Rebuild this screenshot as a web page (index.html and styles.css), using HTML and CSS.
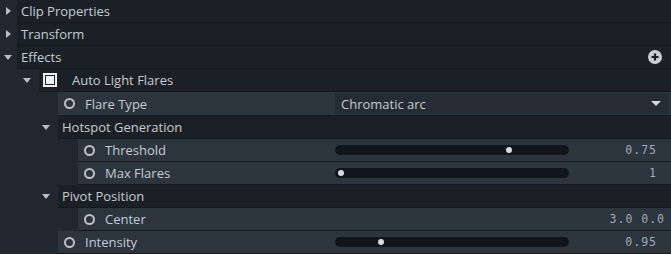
FILE: index.html
```html
<!DOCTYPE html>
<html lang="en">
<head>
  <meta charset="UTF-8" />
  <title>Clip Properties</title>
  <link rel="stylesheet" href="styles.css">
</head>
<body>
  <div class="panel">
    <div class="row group lvl0"><span class="tri closed"></span><div class="cell">Clip Properties</div></div>
    <div class="row group lvl0"><span class="tri closed"></span><div class="cell">Transform</div></div>
    <div class="row group lvl0"><span class="tri"></span><div class="cell">Effects
      <span class="add">
        <svg width="14" height="14" viewBox="0 0 14 14"><circle cx="7" cy="7" r="7" fill="#c9ccd0"/><path d="M7 3.5v7M3.5 7h7" stroke="#1b2027" stroke-width="2.2"/></svg>
      </span></div></div>

    <div class="row group lvl1"><span class="tri"></span><div class="cell"><span class="check"></span>Auto Light Flares</div></div>

    <div class="row prop lvl2 tall">
      <div class="cell"><span class="dot"></span><span class="label">Flare Type</span>
        <div class="select">Chromatic arc<span class="caret"></span></div>
      </div>
    </div>

    <div class="row group lvl2"><span class="tri"></span><div class="cell">Hotspot Generation</div></div>
    <div class="row prop lvl3">
      <div class="cell"><span class="dot"></span><span class="label">Threshold</span>
        <div class="slider"><div class="track"><span class="knob" style="left: 171px"></span></div><span class="val">0.75</span></div>
      </div>
    </div>
    <div class="row prop lvl3">
      <div class="cell"><span class="dot"></span><span class="label">Max Flares</span>
        <div class="slider"><div class="track"><span class="knob" style="left: 3px"></span></div><span class="val">1</span></div>
      </div>
    </div>

    <div class="row group lvl2"><span class="tri"></span><div class="cell">Pivot Position</div></div>
    <div class="row prop lvl3">
      <div class="cell"><span class="dot"></span><span class="label">Center</span>
        <div class="slider"><span class="val wide">3.0 0.0</span></div>
      </div>
    </div>

    <div class="row prop lvl2">
      <div class="cell"><span class="dot"></span><span class="label">Intensity</span>
        <div class="slider"><div class="track"><span class="knob" style="left: 43px"></span></div><span class="val">0.95</span></div>
      </div>
    </div>
  </div>
</body>
</html>
```

FILE: styles.css
```css
* {
  margin: 0;
  padding: 0;
  box-sizing: border-box;
}

body {
  background: #21272e;
  font-family: 'Open Sans', 'Noto Sans', sans-serif;
  font-size: 13px;
  color: #c6cbd0;
}

.panel {
  width: 671px;
  height: 254px;
  overflow: hidden;
  background: #21272e;
}

.row {
  display: flex;
  height: 23px;
  align-items: stretch;
}

.row.tall {
  height: 24px;
}

.lvl0 { padding-left: 0; }
.lvl1 { padding-left: 19px; }
.lvl2 { padding-left: 38px; }
.lvl3 { padding-left: 58px; }

.tri {
  width: 17px;
  flex: none;
  position: relative;
}

.tri::after {
  content: '';
  position: absolute;
  left: 4px;
  top: 9px;
  border-left: 4px solid transparent;
  border-right: 4px solid transparent;
  border-top: 5px solid #b9bec4;
}

.tri.closed::after {
  left: 6px;
  top: 7px;
  border-top: 4px solid transparent;
  border-bottom: 4px solid transparent;
  border-left: 5px solid #b9bec4;
  border-right: none;
}

.lvl1 .tri, .lvl2 .tri {
  width: 20px;
}

.cell {
  flex: 1;
  display: flex;
  align-items: center;
  border-bottom: 1px solid #15191e;
  position: relative;
}

.group .cell {
  background: #1b2027;
  padding-left: 4px;
}

.prop .cell {
  background: #2c343e;
  padding-left: 6px;
}

.lvl2.prop .cell,
.lvl3.prop .cell {
  margin-left: 20px;
}

.check {
  width: 14px;
  height: 14px;
  border: 2px solid #eceef0;
  background: #1b2027;
  margin: 0 15px 0 0;
  position: relative;
}

.check::after {
  content: '';
  position: absolute;
  left: 1px;
  top: 1px;
  width: 8px;
  height: 8px;
  background: #f4f5f6;
}

.dot {
  width: 11px;
  height: 11px;
  border: 2px solid #bcc1c6;
  border-radius: 50%;
  margin-right: 10px;
  flex: none;
}

.label {
  flex: none;
}

.select {
  position: absolute;
  left: 277px;
  right: 2px;
  top: 1px;
  bottom: 1px;
  background: #252c35;
  display: flex;
  align-items: center;
  padding-left: 6px;
}

.caret {
  position: absolute;
  right: 8px;
  top: 8px;
  border-left: 5px solid transparent;
  border-right: 5px solid transparent;
  border-top: 5px solid #d4d8dc;
}

.slider {
  position: absolute;
  left: 257px;
  right: 0;
  top: 0;
  bottom: 0;
  display: flex;
  align-items: center;
}

.lvl2.prop .slider {
  left: 277px;
}

.track {
  width: 234px;
  height: 10px;
  border-radius: 5px;
  background: #12161b;
  position: relative;
}

.knob {
  position: absolute;
  top: 2px;
  width: 6px;
  height: 6px;
  border-radius: 50%;
  background: #d9dcdf;
}

.val {
  flex: 1;
  text-align: right;
  padding-right: 14px;
  font-family: 'DejaVu Sans Mono', 'Liberation Mono', monospace;
  font-size: 11.5px;
  letter-spacing: 1px;
  color: #a4abb2;
}

.val.wide {
  padding-right: 6px;
}

.add {
  position: absolute;
  right: 9px;
  top: 4px;
  display: flex;
}
```
